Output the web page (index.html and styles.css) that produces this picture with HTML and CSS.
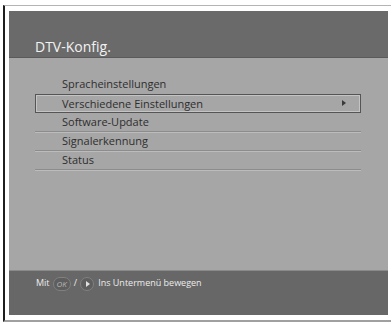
FILE: index.html
```html
<!DOCTYPE html>
<html>
<head>
<meta charset="utf-8">
<link rel="stylesheet" href="styles.css">
</head>
<body>
<div class="frame">
  <div class="screen">
    <div class="header"><span class="title">DTV-Konfig.</span></div>
    <div class="body">
      <ul class="menu">
        <li class="item first">Spracheinstellungen</li>
        <li class="item selected">Verschiedene Einstellungen<span class="arrow"></span></li>
        <li class="item">Software-Update</li>
        <li class="item">Signalerkennung</li>
        <li class="item">Status</li>
      </ul>
    </div>
    <div class="footer">
      <span>Mit</span>
      <span class="okbtn">OK</span>
      <span>/</span>
      <span class="rbtn"><span class="rtri"></span></span>
      <span class="hint">Ins Untermenü bewegen</span>
    </div>
  </div>
</div>
</body>
</html>
```
FILE: styles.css
```css
html, body {
  margin: 0;
  padding: 0;
  background: #ffffff;
}
body {
  font-family: "Open Sans", "DejaVu Sans", sans-serif;
}
.frame {
  margin: 5px 0 0 3px;
  width: 381px;
  height: 307px;
  border-left: 2px solid #1e1e1e;
  border-top: 1px solid #b4b4b4;
  border-bottom: 2px solid #a0a0a0;
  padding: 5px 1px 2px 4px;
  display: flex;
}
.screen {
  width: 379px;
  height: 304px;
  display: flex;
  flex-direction: column;
  background: #a6a6a6;
}
.header {
  height: 46px;
  background: #6a6a6a;
  display: flex;
  align-items: flex-end;
  padding-left: 26px;
  box-sizing: border-box;
  padding-bottom: 1px;
}
.title {
  color: #f2f2f2;
  font-size: 14px;
  line-height: 18px;
}
.body {
  flex: 1;
  padding-top: 17px;
  border-top: 1px solid #5a5a5a;
}
.menu {
  list-style: none;
  margin: 0 0 0 26px;
  padding: 0;
  width: 326px;
}
.item {
  height: 19px;
  box-sizing: border-box;
  padding-left: 27px;
  font-size: 11px;
  line-height: 18px;
  color: #2e2e2e;
  border-bottom: 1px solid #8c8c8c;
  box-shadow: 0 1px 0 #bcbcbc;
  position: relative;
}
.item.first {
  border-bottom: none;
  box-shadow: none;
}
.item.selected {
  border: 1px solid #555555;
  box-shadow: inset 1px 1px 0 #c4c4c4, inset -1px -1px 0 #c4c4c4;
  padding-left: 26px;
  line-height: 17px;
}
.arrow {
  position: absolute;
  right: 14px;
  top: 5px;
  width: 0;
  height: 0;
  border-top: 3px solid transparent;
  border-bottom: 3px solid transparent;
  border-left: 4px solid #3a3a3a;
}
.footer {
  height: 45px;
  background: #676767;
  border-top: 1px solid #8a8a8a;
  box-sizing: border-box;
  display: flex;
  align-items: flex-start;
  gap: 3px;
  padding: 5px 0 0 27px;
  color: #ececec;
  font-size: 9px;
  line-height: 14px;
}
.okbtn {
  font-style: italic;
  font-size: 8px;
  color: #b4b4b4;
  background: #5e5e5e;
  border: 1px solid #808080;
  border-radius: 7px;
  padding: 0 3px;
  height: 12px;
  line-height: 12px;
  margin-top: 1px;
}
.rbtn {
  width: 12px;
  height: 12px;
  border-radius: 50%;
  background: #5e5e5e;
  border: 1px solid #808080;
  margin-top: 1px;
  display: flex;
  align-items: center;
  justify-content: center;
}
.rtri {
  width: 0;
  height: 0;
  border-top: 3px solid transparent;
  border-bottom: 3px solid transparent;
  border-left: 4px solid #e0e0e0;
  margin-left: 1px;
}
.hint {
  margin-left: 1px;
}
```
